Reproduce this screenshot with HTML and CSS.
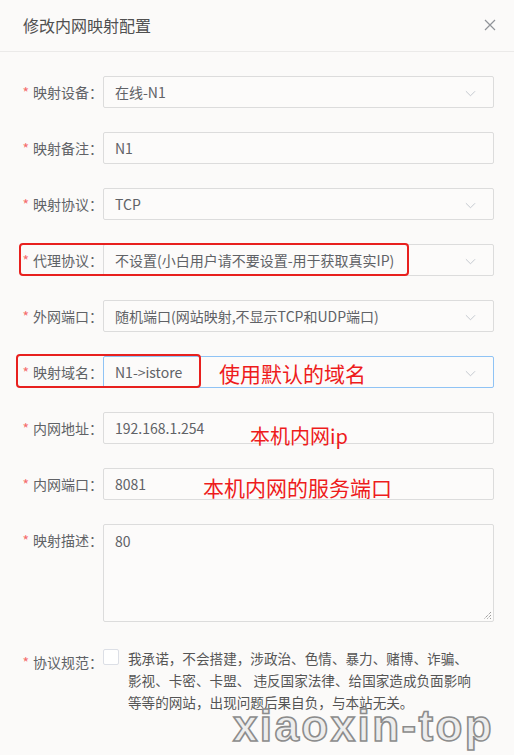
FILE: index.html
```html
<!DOCTYPE html>
<html lang="zh-CN">
<head>
<meta charset="utf-8">
<title>修改内网映射配置</title>
<link rel="stylesheet" href="styles.css">
</head>
<body>
<div class="dialog">
  <div class="header">
    <span class="title">修改内网映射配置</span>
    <svg class="close" width="12" height="12" viewBox="0 0 12 12"><path d="M1 1L11 11M11 1L1 11" stroke="#909399" stroke-width="1.2" fill="none"/></svg>
  </div>
  <div class="body">
    <div class="row">
      <label class="label"><span class="star">*</span>映射设备：</label>
      <div class="input select">在线-N1<svg class="chev" viewBox="0 0 12 7"><path d="M1 1L6 6L11 1" stroke="#c0c4cc" stroke-width="1" fill="none"/></svg></div>
    </div>
    <div class="row">
      <label class="label"><span class="star">*</span>映射备注：</label>
      <div class="input">N1</div>
    </div>
    <div class="row">
      <label class="label"><span class="star">*</span>映射协议：</label>
      <div class="input select">TCP<svg class="chev" viewBox="0 0 12 7"><path d="M1 1L6 6L11 1" stroke="#c0c4cc" stroke-width="1" fill="none"/></svg></div>
    </div>
    <div class="row">
      <span class="mark mark-proxy"></span>
      <label class="label"><span class="star">*</span>代理协议：</label>
      <div class="input select">不设置(小白用户请不要设置-用于获取真实IP)<svg class="chev" viewBox="0 0 12 7"><path d="M1 1L6 6L11 1" stroke="#c0c4cc" stroke-width="1" fill="none"/></svg></div>
    </div>
    <div class="row">
      <label class="label"><span class="star">*</span>外网端口：</label>
      <div class="input select">随机端口(网站映射,不显示TCP和UDP端口)<svg class="chev" viewBox="0 0 12 7"><path d="M1 1L6 6L11 1" stroke="#c0c4cc" stroke-width="1" fill="none"/></svg></div>
    </div>
    <div class="row">
      <span class="mark mark-domain"></span>
      <label class="label"><span class="star">*</span>映射域名：</label>
      <div class="input select focus">N1-&gt;istore<span class="note note-domain">使用默认的域名</span><svg class="chev" viewBox="0 0 12 7"><path d="M1 1L6 6L11 1" stroke="#c0c4cc" stroke-width="1" fill="none"/></svg></div>
    </div>
    <div class="row">
      <label class="label"><span class="star">*</span>内网地址：</label>
      <div class="input">192.168.1.254<span class="note note-ip">本机内网ip</span></div>
    </div>
    <div class="row">
      <label class="label"><span class="star">*</span>内网端口：</label>
      <div class="input">8081<span class="note note-port">本机内网的服务端口</span></div>
    </div>
    <div class="row row-top">
      <label class="label"><span class="star">*</span>映射描述：</label>
      <div class="textarea">80<svg class="grip" width="10" height="10" viewBox="0 0 10 10"><path d="M9 2L2 9M9 5L5 9M9 8L8 9" stroke="#777" stroke-width="1" stroke-dasharray="1 1" fill="none"/></svg></div>
    </div>
    <div class="row row-top">
      <label class="label"><span class="star">*</span>协议规范：</label>
      <span class="checkbox"></span>
      <p class="agree">我承诺，不会搭建，涉政治、色情、暴力、赌博、诈骗、<br>影视、卡密、卡盟、 违反国家法律、给国家造成负面影响<br>等等的网站，出现问题后果自负，与本站无关。</p>
    </div>
  </div>
  <div class="watermark">xiaoxin-top</div>
</div>
</body>
</html>
```

FILE: styles.css
```css
* { box-sizing: border-box; }
html, body {
  margin: 0;
  padding: 0;
  background: #fbfaf9;
}
body {
  font-family: "Microsoft YaHei", "Noto Sans CJK SC", "Noto Sans", sans-serif;
  color: #606266;
  width: 514px;
  height: 755px;
  overflow: hidden;
}
.dialog {
  position: relative;
  width: 514px;
  height: 755px;
}
.header {
  height: 52px;
  border-bottom: 1px solid #ebeae9;
  display: flex;
  align-items: center;
  justify-content: space-between;
  padding: 0 18px 0 23px;
}
.title {
  font-size: 16px;
  color: #505050;
  line-height: 24px;
  margin-top: -2px;
}
.close {
  width: 12px;
  height: 12px;
  margin-top: -2px;
}
.body {
  padding: 24px 20px 0 0;
}
.row {
  position: relative;
  display: flex;
  align-items: center;
  margin-bottom: 24px;
}
.row-top {
  align-items: flex-start;
}
.label {
  width: 103px;
  flex: none;
  text-align: right;
  font-size: 14px;
  line-height: 32px;
  color: #606266;
  white-space: nowrap;
}
.star {
  color: #f56c6c;
  margin-right: 4px;
}
.input {
  position: relative;
  flex: 1;
  height: 32px;
  border: 1px solid #dcdcdc;
  border-radius: 2px;
  background: #fcfbfa;
  padding: 0 30px 0 11px;
  font-size: 14px;
  line-height: 30px;
  color: #606266;
  white-space: nowrap;
}
.input.focus {
  border-color: #8fc3f5;
}
.chev {
  position: absolute;
  right: 17px;
  top: 13px;
  width: 11px;
  height: 7px;
}
.textarea {
  position: relative;
  flex: 1;
  height: 98px;
  border: 1px solid #dcdcdc;
  border-radius: 2px;
  background: #fcfbfa;
  padding: 5px 11px;
  font-size: 14px;
  line-height: 22px;
  color: #606266;
}
.grip {
  position: absolute;
  right: 1px;
  bottom: 1px;
}
.checkbox {
  flex: none;
  width: 16px;
  height: 16px;
  margin-top: 3px;
  border: 1px solid #dcdfe6;
  border-radius: 2px;
  background: #fff;
}
.agree {
  margin: 1px 0 0 9px;
  font-size: 13.6px;
  line-height: 22px;
  color: #555;
  white-space: nowrap;
}
.mark {
  position: absolute;
  border: 2px solid #e8201e;
  border-radius: 4px;
  pointer-events: none;
  z-index: 2;
}
.mark-proxy {
  left: 19px;
  top: -1px;
  width: 390px;
  height: 33px;
}
.mark-domain {
  left: 16px;
  top: -2px;
  width: 185px;
  height: 34px;
}
.note {
  position: absolute;
  color: #ee1c1c;
  font-size: 21px;
  line-height: 28px;
  white-space: nowrap;
}
.note-domain { left: 115px; top: 2px; }
.note-ip { left: 146px; top: 9px; font-size: 20px; }
.note-port { left: 99px; top: 4px; }
.watermark {
  position: absolute;
  left: 233px;
  top: 701px;
  font-family: "Liberation Sans", Arial, sans-serif;
  font-weight: bold;
  font-size: 44px;
  letter-spacing: 2.4px;
  line-height: 50px;
  color: #ededed;
  -webkit-text-stroke: 1.6px #8c8c8c;
  text-shadow: 0 0 1px #ffffff;
}
```
